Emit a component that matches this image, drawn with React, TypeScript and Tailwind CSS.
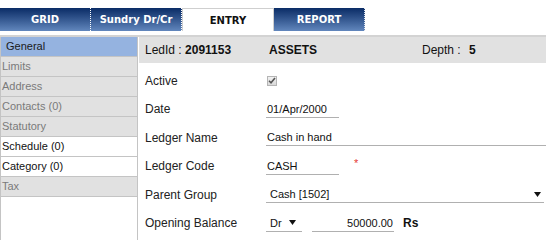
import React from "react";

const Arrow = () => (
  <svg width="7" height="5" viewBox="0 0 7 5" className="block">
    <polygon points="0,0 7,0 3.5,5" fill="#111" />
  </svg>
);

export default function App() {
  const side = [
    { t: "General", k: "sel" },
    { t: "Limits", k: "dis" },
    { t: "Address", k: "dis" },
    { t: "Contacts (0)", k: "dis" },
    { t: "Statutory", k: "dis" },
    { t: "Schedule (0)", k: "en" },
    { t: "Category (0)", k: "en" },
    { t: "Tax", k: "dis" },
  ];
  const tab =
    "h-[23px] shrink-0 flex items-center justify-center text-white text-[10px] font-bold bg-gradient-to-b from-[#0a2c66] to-[#6287bd] font-['DejaVu_Sans',sans-serif]";
  return (
    <div className="w-[546px] h-[240px] bg-white overflow-hidden font-['Liberation_Sans',Arial,sans-serif] text-[#1a1a1a]">
      <div className="pt-[8px] flex">
        <div className={`${tab} w-[91px] border-r border-dotted border-white`}>GRID</div>
        <div className={`${tab} w-[91px] border-r border-dotted border-white`}>Sundry Dr/Cr</div>
        <div className="h-[23px] shrink-0 w-[92px] flex items-center justify-center text-[10px] font-bold bg-white border-t border-x border-[#cfcfcf] text-[#111] font-['DejaVu_Sans',sans-serif]">
          ENTRY
        </div>
        <div className={`${tab} w-[91px] border-r border-dotted border-[#dde4ee]`}>REPORT</div>
      </div>
      <div className="mt-[4px] h-[2px] bg-[#d3d3d3]" />
      <div className="flex h-[210px]">
        <div className="w-[138px] shrink-0 border-l border-r border-[#c4c4c4] flex flex-col">
          {side.map((s) => (
            <div
              key={s.t}
              className={`h-[20px] border-b border-[#c4c4c4] flex items-center text-[11px] ${
                s.k === "sel"
                  ? "bg-[#95b3e0] text-[#1a1a1a] pl-[5px]"
                  : s.k === "dis"
                  ? "bg-[#e1e1e1] text-[#7a7a7a] pl-[1px]"
                  : "bg-white text-[#111] pl-[1px]"
              }`}
            >
              {s.t}
            </div>
          ))}
        </div>
        <div className="flex-1 min-w-0 ml-[1px] flex flex-col overflow-hidden">
          <div className="h-[26px] bg-[#e1e1e1] flex items-center pl-[6px] text-[12px] text-[#111]">
            <div className="w-[124px] shrink-0">
              LedId : <span className="font-bold">2091153</span>
            </div>
            <div className="w-[153px] shrink-0 font-bold">ASSETS</div>
            <div className="w-[47px] shrink-0">Depth :</div>
            <div className="font-bold">5</div>
          </div>
          <div className="pt-[3.5px] pl-[6px] text-[12px]">
            <div className="h-[28.5px] flex items-center">
              <div className="w-[121px] shrink-0 text-[#222]">Active</div>
              <div className="ml-[1px] w-[10px] h-[10px] border border-[#b5b5b5] bg-gradient-to-b from-[#f2f2f2] to-[#d9d9d9] flex items-center justify-center">
                <svg width="8" height="7" viewBox="0 0 8 7">
                  <path d="M1 3.8 L3 5.8 L7 1" stroke="#555" strokeWidth="1.6" fill="none" />
                </svg>
              </div>
            </div>
            <div className="h-[28.5px] flex items-center">
              <div className="w-[121px] shrink-0 text-[#222]">Date</div>
              <div className="w-[73px] shrink-0 h-[17px] border-b border-[#b0b0b0] flex items-center pl-[1px] text-[11px] text-[#111]">
                01/Apr/2000
              </div>
            </div>
            <div className="h-[28.5px] flex items-center">
              <div className="w-[121px] shrink-0 text-[#222]">Ledger Name</div>
              <div className="w-[290px] shrink-0 h-[17px] border-b border-[#b0b0b0] flex items-center pl-[1px] text-[11px] text-[#111]">
                Cash in hand
              </div>
            </div>
            <div className="h-[28.5px] flex items-center">
              <div className="w-[121px] shrink-0 text-[#222]">Ledger Code</div>
              <div className="w-[73px] shrink-0 h-[17px] border-b border-[#b0b0b0] flex items-center pl-[1px] text-[11px] text-[#111]">
                CASH
              </div>
              <div className="ml-[15px] -mt-[6px] text-[11px] text-[#e53935]">*</div>
            </div>
            <div className="h-[28.5px] flex items-center">
              <div className="w-[121px] shrink-0 text-[#222]">Parent Group</div>
              <div className="w-[278px] shrink-0 h-[17px] border-b border-[#b0b0b0] flex items-center justify-between pl-[4px] pr-[3px] text-[11px] text-[#111]">
                <span>Cash [1502]</span>
                <Arrow />
              </div>
            </div>
            <div className="h-[28.5px] flex items-center">
              <div className="w-[121px] shrink-0 text-[#222]">Opening Balance</div>
              <div className="w-[36px] shrink-0 h-[17px] border-b border-[#b0b0b0] flex items-center pl-[4px] text-[11px] text-[#111]">
                <span>Dr</span>
                <span className="ml-[7px]">
                  <Arrow />
                </span>
              </div>
              <div className="ml-[10px] w-[82px] shrink-0 h-[17px] border-b border-[#b0b0b0] flex items-center justify-end pr-[1px] text-[11px] text-[#111]">
                50000.00
              </div>
              <div className="ml-[9px] font-bold text-[12px] text-[#111]">Rs</div>
            </div>
          </div>
        </div>
      </div>
    </div>
  );
}
